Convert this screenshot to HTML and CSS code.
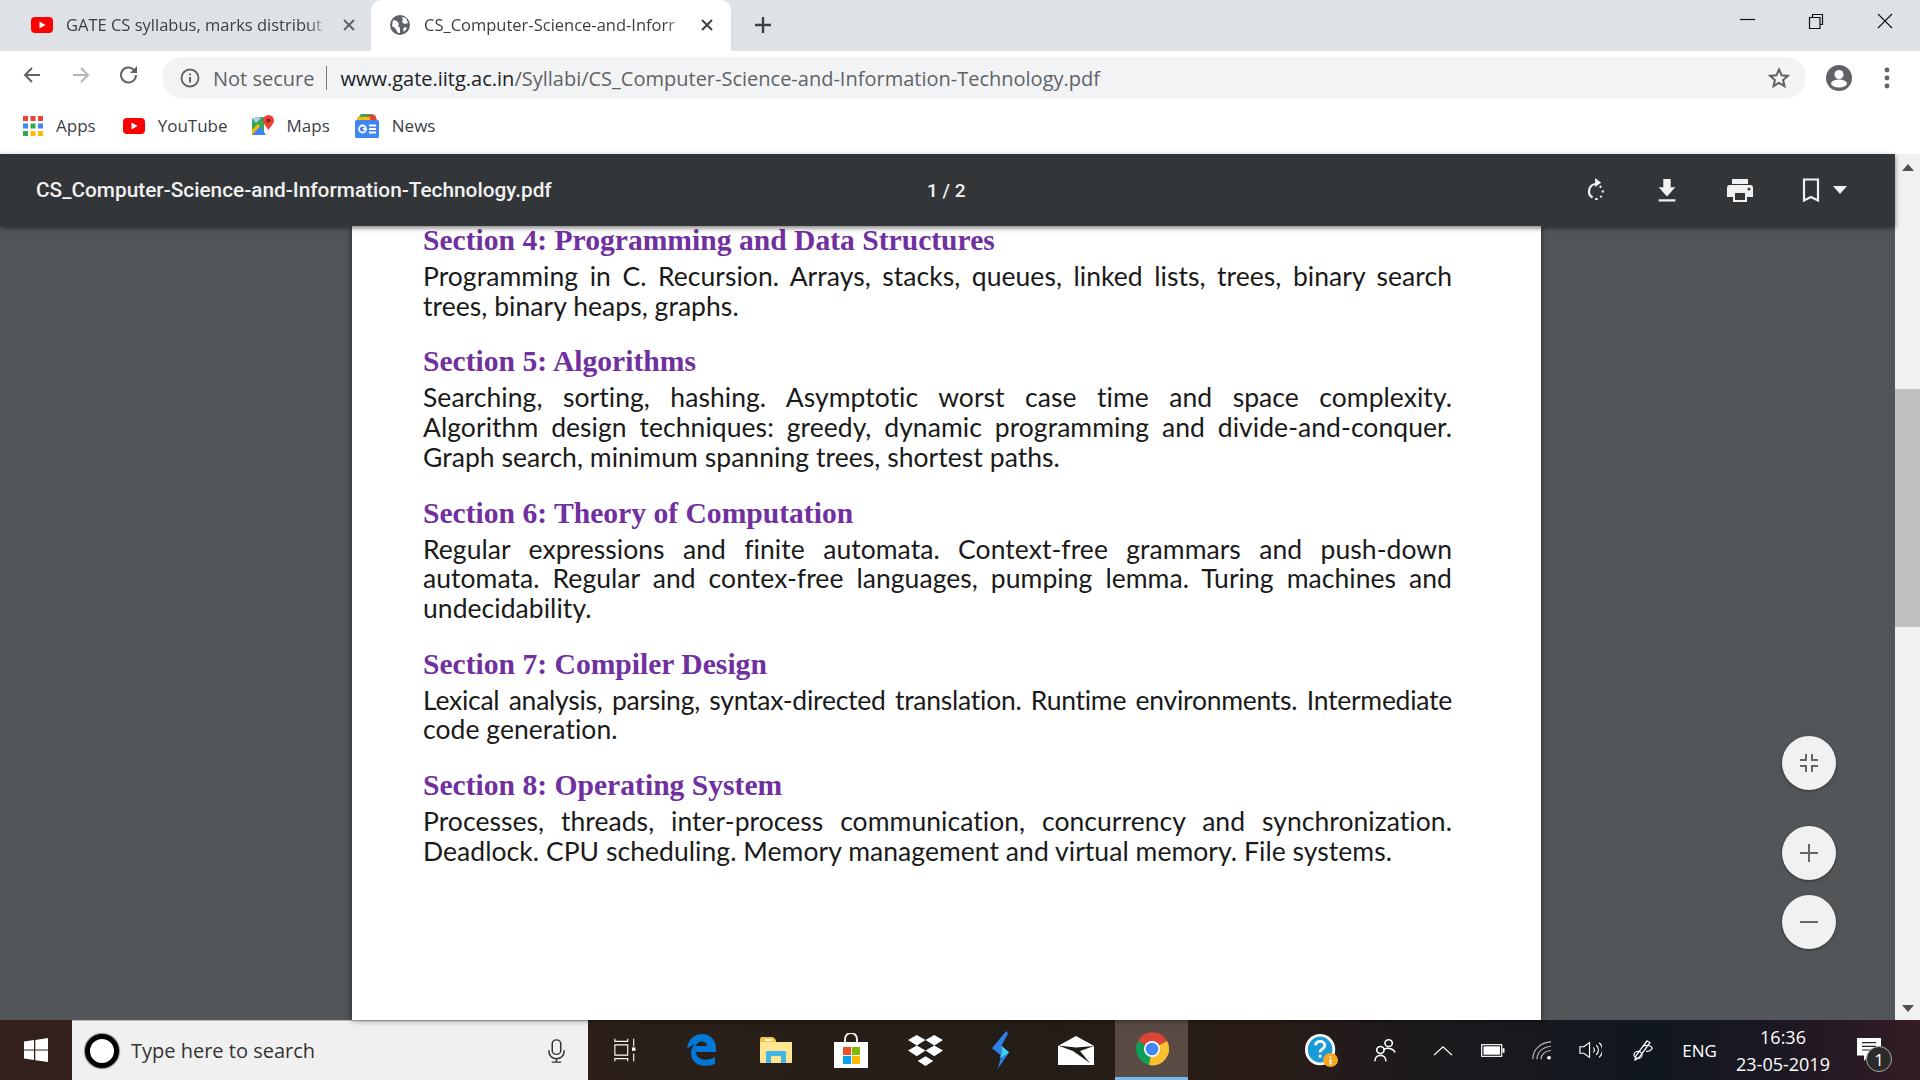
FILE: index.html
```html
<!DOCTYPE html>
<html lang="en">
<head>
    <meta charset="UTF-8">
    <title>CS_Computer-Science-and-Information-Technology.pdf</title>
    <link rel="stylesheet" href="styles.css">
</head>
<body>
    <!-- tab strip -->
    <div class="tabstrip">
        <div class="tab">
            <svg class="favicon" width="22" height="16" viewBox="0 0 22 16"><rect width="22" height="16" rx="4" fill="#f00"/><path d="M8.5 4.5v7l6-3.500z" fill="#fff"/></svg>
            <span class="tab-title">GATE CS syllabus, marks distribut</span>
            <svg class="tab-close" width="12" height="12" viewBox="0 0 12 12"><path d="M1 1l10 10M11 1L1 11" stroke="#5f6368" stroke-width="2"/></svg>
        </div>
        <div class="tab tab-active">
            <svg class="favicon" width="20" height="20" viewBox="0 0 20 20"><circle cx="10" cy="10" r="10" fill="#5f6368"/><path d="M3 5l4 1 2 3-1 2 2 2v5l-2 0-3-5-3-2zM12 2l4 1 2 5-3 1-2-1-1-2 1-1zM15 12l2 1-3 4-1-3z" fill="#fff"/></svg>
            <span class="tab-title">CS_Computer-Science-and-Inforr</span>
            <svg class="tab-close" width="12" height="12" viewBox="0 0 12 12"><path d="M1 1l10 10M11 1L1 11" stroke="#3c4043" stroke-width="2"/></svg>
        </div>
        <svg class="new-tab" width="18" height="18" viewBox="0 0 18 18"><path d="M9 1v16M1 9h16" stroke="#3c4043" stroke-width="2.400"/></svg>
        <div class="window-controls">
            <svg width="16" height="16" viewBox="0 0 16 16"><path d="M1 6.500h15" stroke="#111" stroke-width="1.200"/></svg>
            <svg width="16" height="16" viewBox="0 0 16 16"><path d="M1.500 4.500h10.500v11h-10.500zM4.500 4.500v-3h10v10h-2.500" fill="none" stroke="#111" stroke-width="1.200"/></svg>
            <svg width="16" height="16" viewBox="0 0 16 16"><path d="M1 1l14 14M15 1L1 15" stroke="#111" stroke-width="1.100"/></svg>
        </div>
    </div>

    <!-- address bar -->
    <div class="toolbar">
        <svg class="nav-icon" width="20" height="20" viewBox="0 0 20 20"><path d="M18 10H3M10 3l-7 7 7 7" fill="none" stroke="#5f6368" stroke-width="2"/></svg>
        <svg class="nav-icon" width="20" height="20" viewBox="0 0 20 20"><path d="M2 10h15M10 3l7 7-7 7" fill="none" stroke="#b4b6ba" stroke-width="2"/></svg>
        <svg class="nav-icon nav-reload" width="22" height="22" viewBox="0 0 22 22"><path d="M18 11a7.500 7.500 0 1 1-2.200-5.300L18 8" fill="none" stroke="#5f6368" stroke-width="2"/><path d="M19 2v7h-7z" fill="#5f6368"/></svg>
        <div class="omnibox">
            <svg class="info-icon" width="20" height="20" viewBox="0 0 20 20"><circle cx="10" cy="10" r="8.500" fill="none" stroke="#5f6368" stroke-width="1.800"/><path d="M10 9v5.500M10 5.500v1.800" stroke="#5f6368" stroke-width="2"/></svg>
            <span class="not-secure">Not secure</span>
            <span class="omni-sep"></span>
            <span class="url">www.gate.iitg.ac.in<span class="url-path">/Syllabi/CS_Computer-Science-and-Information-Technology.pdf</span></span>
            <svg class="star" width="22" height="22" viewBox="0 0 22 22"><path d="M11 2.500l2.600 5.800 6.200.6-4.700 4.100 1.400 6.200L11 16l-5.500 3.200 1.400-6.200L2.200 8.900l6.200-.6z" fill="none" stroke="#5f6368" stroke-width="2"/></svg>
        </div>
        <svg class="avatar" width="26" height="26" viewBox="0 0 26 26"><circle cx="13" cy="13" r="13" fill="#5f6368"/><circle cx="13" cy="9.500" r="4.500" fill="#fff"/><ellipse cx="13" cy="18.500" rx="8" ry="4" fill="#fff"/></svg>
        <svg class="kebab" width="6" height="22" viewBox="0 0 6 22"><circle cx="3" cy="3" r="2.400" fill="#5f6368"/><circle cx="3" cy="11" r="2.400" fill="#5f6368"/><circle cx="3" cy="19" r="2.400" fill="#5f6368"/></svg>
    </div>

    <!-- bookmarks -->
    <div class="bookmarks">
        <div class="bookmark bm-apps">
            <svg width="20" height="20" viewBox="0 0 20 20"><rect x="0" y="0" width="5" height="5" fill="#ea4335"/><rect x="7.500" y="0" width="5" height="5" fill="#ea4335"/><rect x="15" y="0" width="5" height="5" fill="#ea4335"/><rect x="0" y="7.500" width="5" height="5" fill="#4285f4"/><rect x="7.500" y="7.500" width="5" height="5" fill="#34a853"/><rect x="15" y="7.500" width="5" height="5" fill="#4285f4"/><rect x="0" y="15" width="5" height="5" fill="#34a853"/><rect x="7.500" y="15" width="5" height="5" fill="#fbbc05"/><rect x="15" y="15" width="5" height="5" fill="#fbbc05"/></svg>
            <span>Apps</span>
        </div>
        <div class="bookmark bm-yt">
            <svg width="22" height="16" viewBox="0 0 22 16"><rect width="22" height="16" rx="4" fill="#f00"/><path d="M8.500 4.500v7l6-3.500z" fill="#fff"/></svg>
            <span>YouTube</span>
        </div>
        <div class="bookmark bm-maps">
            <svg width="22" height="22" viewBox="0 0 22 22"><path d="M0 3l12-1v18L0 20z" fill="#34a853"/><path d="M0 20l8-9 6 9z" fill="#4285f4"/><path d="M8 11L0 20V15l6-6z" fill="#fbbc05"/><path d="M0 3h9L4 8z" fill="#aecbfa"/><path d="M16.500 0a5.500 5.500 0 0 1 5.500 5.500c0 4-4 6-5.500 10-1.500-4-5.500-6-5.500-10A5.500 5.500 0 0 1 16.500 0z" fill="#ea4335"/><circle cx="16.500" cy="5.500" r="2" fill="#8c1d18"/></svg>
            <span>Maps</span>
        </div>
        <div class="bookmark bm-news">
            <svg width="24" height="24" viewBox="0 0 24 24"><path d="M3 4l3-4h12l3 4z" fill="#34a853"/><path d="M12 1h8l2 5H12z" fill="#ea4335"/><path d="M2 3h13v4H2z" fill="#fbbc05"/><rect y="6" width="24" height="18" rx="1.500" fill="#4285f4"/><circle cx="7.500" cy="15" r="3.500" fill="none" stroke="#fff" stroke-width="1.800"/><path d="M8 15h3.500M14 11.500h7M14 15h7M14 18.500h7" stroke="#fff" stroke-width="1.800"/></svg>
            <span>News</span>
        </div>
    </div>

    <!-- pdf viewer -->
    <div class="viewer-row">
        <div class="viewer">
            <div class="pdf-bar">
                <div class="pdf-title">CS_Computer-Science-and-Information-Technology.pdf</div>
                <div class="pdf-pages">1 / 2</div>
                <div class="pdf-actions">
                    <svg width="24" height="28" viewBox="-2 -1 28 30"><path d="M12 7a8.500 8.500 0 0 0-4 15.800" fill="none" stroke="#f1f1f1" stroke-width="2.600"/><path d="M11 0l7 5.500-7 5z" fill="#f1f1f1"/><path d="M16.500 9.500l1.500 1.500M20 14.500v2.500M18.500 21l-1.500 1.500M14 24.500h-3" stroke="#f1f1f1" stroke-width="2.600"/></svg>
                    <svg width="24" height="28" viewBox="-1 -1 26 30"><path d="M8 2h8v9h5l-9 10-9-10h5zM3 24h18v2.500H3z" fill="#f1f1f1"/></svg>
                    <svg width="28" height="28" viewBox="0 0 28 28"><path d="M6 3h16v5H6zM4 9h20a3 3 0 0 1 3 3v9h-6v5H7v-5H1v-9a3 3 0 0 1 3-3z" fill="#f1f1f1"/><rect x="9" y="17" width="10" height="7" fill="#323639"/><circle cx="23" cy="13" r="1.500" fill="#323639"/></svg>
                    <div class="bookmark-action">
                        <svg width="20" height="28" viewBox="0 0 20 28"><path d="M3 3.500h14v21l-7-3.500-7 3.500z" fill="none" stroke="#f1f1f1" stroke-width="2.200"/></svg>
                        <svg width="14" height="8" viewBox="0 0 14 8"><path d="M0 0h14L7 8z" fill="#f1f1f1"/></svg>
                    </div>
                </div>
            </div>
            <div class="pdf-scroll">
                <div class="pdf-page">
                    <section class="syllabus">
                        <h3>Section 4: Programming and Data Structures</h3>
                        <p class="line-full">Programming in C. Recursion. Arrays, stacks, queues, linked lists, trees, binary search</p>
                        <p>trees, binary heaps, graphs.</p>
                    </section>
                    <section class="syllabus">
                        <h3>Section 5: Algorithms</h3>
                        <p class="line-full">Searching, sorting, hashing. Asymptotic worst case time and space complexity.</p>
                        <p class="line-full">Algorithm design techniques: greedy, dynamic programming and divide-and-conquer.</p>
                        <p>Graph search, minimum spanning trees, shortest paths.</p>
                    </section>
                    <section class="syllabus">
                        <h3>Section 6: Theory of Computation</h3>
                        <p class="line-full">Regular expressions and finite automata. Context-free grammars and push-down</p>
                        <p class="line-full">automata. Regular and contex-free languages, pumping lemma. Turing machines and</p>
                        <p>undecidability.</p>
                    </section>
                    <section class="syllabus">
                        <h3>Section 7: Compiler Design</h3>
                        <p class="line-full line-tight">Lexical analysis, parsing, syntax-directed translation. Runtime environments. Intermediate</p>
                        <p>code generation.</p>
                    </section>
                    <section class="syllabus">
                        <h3>Section 8: Operating System</h3>
                        <p class="line-full">Processes, threads, inter-process communication, concurrency and synchronization.</p>
                        <p>Deadlock. CPU scheduling. Memory management and virtual memory. File systems.</p>
                    </section>
                </div>
            </div>
            <button class="fab fab-fit"><svg width="18" height="18" viewBox="0 0 18 18"><path d="M6 0v6H0M12 0v6h6M6 18v-6H0M12 18v-6h6" fill="none" stroke="#666" stroke-width="2"/></svg></button>
            <button class="fab fab-plus"><svg width="18" height="18" viewBox="0 0 18 18"><path d="M9 0v18M0 9h18" stroke="#666" stroke-width="2"/></svg></button>
            <button class="fab fab-minus"><svg width="18" height="18" viewBox="0 0 18 18"><path d="M0 9h18" stroke="#666" stroke-width="2"/></svg></button>
        </div>
        <div class="scrollbar">
            <span class="arrow-up"></span>
            <div class="scroll-track"><div class="scroll-thumb"></div></div>
            <span class="arrow-down"></span>
        </div>
    </div>

    <!-- windows taskbar -->
    <div class="taskbar">
        <div class="start">
            <svg width="24" height="24" viewBox="0 0 24 24"><path d="M0 3.500l10-1.400v9.300H0zM11.300 1.900L24 0v11.400H11.300zM0 12.600h10V22L0 20.500zM11.300 12.600H24V24l-12.700-1.800z" fill="#fff"/></svg>
        </div>
        <div class="search">
            <span class="cortana"></span>
            <span class="search-text">Type here to search</span>
            <svg class="mic" width="17" height="24" viewBox="0 0 18 28" preserveAspectRatio="none"><rect x="4.500" y="1" width="9" height="17" rx="4.500" fill="none" stroke="#333" stroke-width="1.600"/><path d="M1 13v2a8 8 0 0 0 16 0v-2M9 23v4M4 27h10" fill="none" stroke="#333" stroke-width="1.600"/></svg>
        </div>
        <div class="task-slot">
            <svg width="24" height="24" viewBox="0 0 28 28"><path d="M1 1v3h15V1M1 27v-3h15v3M1 8h15v12H1zM23 1v9M23 18v9" fill="none" stroke="#fff" stroke-width="1.300"/><rect x="21" y="11" width="4" height="4" fill="#fff"/></svg>
        </div>
        <div class="task-slot">
            <svg width="30" height="32" viewBox="0 0 30 32"><path d="M1 15C2 5 9 0 16 0c8 0 14 6 14 14v4H10c0 8 11 10 19 5v7c-10 4-24 2-24-11 0-4 2-7 4-9-3 1-6 3-8 5zM10 12h11c0-6-10-6-11 0z" fill="#0078d7"/></svg>
        </div>
        <div class="task-slot">
            <svg width="32" height="26" viewBox="0 0 32 26"><path d="M0 2a2 2 0 0 1 2-2h11l3 3v3H0z" fill="#f5c242"/><path d="M0 5h32v20a1 1 0 0 1-1 1H1a1 1 0 0 1-1-1z" fill="#fde68f"/><path d="M5 2h7v2H5z" fill="#fff"/><path d="M6 26V15a1 1 0 0 1 1-1h18a1 1 0 0 1 1 1v11h-5v-7H11v7z" fill="#42b4e6"/></svg>
        </div>
        <div class="task-slot">
            <svg width="34" height="35" viewBox="0 0 34 35"><path d="M11 9V6a6 6 0 0 1 12 0v3" fill="none" stroke="#e8e8e8" stroke-width="2"/><rect y="9" width="34" height="26" fill="#fff"/><rect x="9" y="14" width="8" height="8" fill="#f25022"/><rect x="18" y="14" width="8" height="8" fill="#7fba00"/><rect x="9" y="23" width="8" height="8" fill="#00a4ef"/><rect x="18" y="23" width="8" height="8" fill="#ffb900"/></svg>
        </div>
        <div class="task-slot">
            <svg width="35" height="31" viewBox="0 0 36 38" preserveAspectRatio="none"><path d="M9 0l9 6-9 7-9-7zM27 0l9 6-9 7-9-7zM9 13l9 6-9 7-9-7zM27 13l9 6-9 7-9-7zM18 26l8 6-8 6-8-6z" fill="#fff"/></svg>
        </div>
        <div class="task-slot">
            <svg width="19" height="38" viewBox="0 0 20 46" preserveAspectRatio="none"><path d="M16 0l2 3-7 15 8 8-12 20 4-16-10-9z" fill="#2f80e8"/><path d="M11 18l8 8-10 7 3-8z" fill="#3fd0ee"/></svg>
        </div>
        <div class="task-slot">
            <svg width="36" height="29" viewBox="0 0 36 29"><path d="M0 10L18 0l18 10v19H0z" fill="#fff"/><path d="M0 9.500l18 2 18-1.500-14 5 10 12-17-12z" fill="#221a14"/><path d="M2 9L18 1l16 8z" fill="#fff"/></svg>
        </div>
        <div class="task-slot task-active">
            <svg width="34" height="34" viewBox="0 0 34 34">
                <path d="M17 17L3 9a16.500 16.500 0 0 1 29 0z" fill="#db4437"/>
                <path d="M17 17L3 9a16.500 16.500 0 0 0 11 24z" fill="#0f9d58"/>
                <path d="M17 17l15-8a16.500 16.500 0 0 1-18 24z" fill="#fbc02d"/>
                <circle cx="17" cy="17" r="8" fill="#fff"/><circle cx="17" cy="17" r="6.300" fill="#4285f4"/>
            </svg>
        </div>
        <div class="tray">
            <div class="tray-slot ts-help">
                <svg width="34" height="33" viewBox="0 0 36 38" preserveAspectRatio="none"><ellipse cx="16" cy="18" rx="16" ry="18" fill="#fff"/><ellipse cx="16" cy="18" rx="13" ry="15" fill="#1a9ad6"/><path d="M11 13c1-6 10-6 10 0 0 4-5 4-5 8M16 24v3" fill="none" stroke="#fff" stroke-width="3"/><circle cx="27" cy="30" r="8" fill="#f5a623"/><path d="M27 26v1.500M27 29v6" stroke="#fff" stroke-width="2"/></svg>
            </div>
            <div class="tray-slot ts-people">
                <svg width="22" height="24" viewBox="0 0 24 28" preserveAspectRatio="none"><circle cx="16" cy="6" r="4" fill="none" stroke="#fff" stroke-width="1.800"/><path d="M11 14c1-3 10-3 12 3" fill="none" stroke="#fff" stroke-width="1.800"/><circle cx="7" cy="14" r="4" fill="none" stroke="#fff" stroke-width="1.800"/><path d="M1 27c0-9 12-9 12 0" fill="none" stroke="#fff" stroke-width="1.800"/></svg>
            </div>
            <div class="tray-slot ts-chevron">
                <svg width="20" height="11" viewBox="0 0 20 12" preserveAspectRatio="none"><path d="M1 11l9-9 9 9" fill="none" stroke="#fff" stroke-width="1.300"/></svg>
            </div>
            <div class="tray-slot ts-battery">
                <svg width="24" height="13" viewBox="0 0 24 14" preserveAspectRatio="none"><rect x=".7" y=".7" width="20" height="12.600" fill="none" stroke="#fff" stroke-width="1.200"/><rect x="2.500" y="2.500" width="16.500" height="9" fill="#fff"/><rect x="21.500" y="4.500" width="2" height="5" fill="#fff"/></svg>
            </div>
            <div class="tray-slot ts-wifi">
                <svg width="20" height="19" viewBox="0 0 20 22" preserveAspectRatio="none"><path d="M1 21A19 19 0 0 1 19 1M5 21A15 15 0 0 1 19 6M9 21A10 10 0 0 1 19 11" fill="none" stroke="#bbb" stroke-width="1.200"/><circle cx="17" cy="19.500" r="2" fill="#fff"/></svg>
            </div>
            <div class="tray-slot ts-volume">
                <svg width="23" height="18" viewBox="0 0 24 22" preserveAspectRatio="none"><path d="M1 7h4l6-5v18l-6-5H1z" fill="none" stroke="#fff" stroke-width="1.200"/><path d="M15 8a5 5 0 0 1 0 6M18 5a9 9 0 0 1 0 12M21 2a13 13 0 0 1 0 18" fill="none" stroke="#fff" stroke-width="1.200"/></svg>
            </div>
            <div class="tray-slot ts-pen">
                <svg width="22" height="21" viewBox="0 0 22 24" preserveAspectRatio="none"><path d="M15 1l3 2-11 17-4 3 1-5zM11 7c4-2 10 0 9 3-1 2-4 3-6 3" fill="none" stroke="#fff" stroke-width="1.300"/><circle cx="6" cy="17" r="4" fill="none" stroke="#fff" stroke-width="1.200"/></svg>
            </div>
            <div class="tray-slot ts-lang">ENG</div>
            <div class="tray-slot ts-clock"><span>16:36</span><span>23-05-2019</span></div>
            <div class="tray-slot ts-notify">
                <svg width="24" height="24" viewBox="0 0 24 26" preserveAspectRatio="none"><path d="M0 0h24v19H12l-5 6v-6H0z" fill="#fff"/><path d="M5 5h14M5 9h14M5 13h14" stroke="#222" stroke-width="1.300"/></svg>
                <span class="notify-badge">1</span>
            </div>
        </div>
    </div>
</body>
</html>
```

FILE: styles.css
```css
* {
    box-sizing: border-box;
}
html, body {
    height: 100%;
}
body {
    margin: 0;
    height: 1080px;
    overflow: hidden;
    display: flex;
    flex-direction: column;
    font-family: "Open Sans", "Noto Sans", sans-serif;
    background: #fff;
}
svg {
    display: block;
    flex: none;
}

/* tab strip */
.tabstrip {
    height: 51px;
    flex: none;
    display: flex;
    background: #dee1e6;
}
.tab {
    width: 371px;
    height: 51px;
    padding: 0 16px 2px 31px;
    display: flex;
    align-items: center;
    color: #3c4043;
    font-size: 16.5px;
}
.tab-active {
    width: 360px;
    padding-left: 19px;
    padding-right: 18px;
    background: #fff;
    border-radius: 10px 10px 0 0;
    color: #3c4043;
}
.tab-title {
    flex: 1;
    min-width: 0;
    margin-left: 13px;
    margin-right: 12px;
    white-space: nowrap;
    -webkit-mask-image: linear-gradient(to left, transparent, #000 24px);
    mask-image: linear-gradient(to left, transparent, #000 24px);
}
.tab-active .tab-title {
    margin-left: 14px;
}
.new-tab {
    margin: 16px 0 0 23px;
}
.window-controls {
    margin-left: auto;
    margin-right: 27px;
    padding-top: 13px;
    display: flex;
    gap: 53px;
}

/* address bar */
.toolbar {
    height: 48px;
    flex: none;
    display: flex;
    align-items: center;
    background: #fff;
}
.nav-icon {
    margin-left: 22px;
    margin-right: 7px;
}
.nav-reload {
    margin-left: 20px;
    margin-right: 10px;
}
.omnibox {
    width: 1644px;
    height: 42px;
    margin-left: 12px;
    margin-top: 6px;
    padding: 0 16px 0 18px;
    border-radius: 21px;
    display: flex;
    align-items: center;
    background: #f1f3f4;
    font-size: 20px;
}
.not-secure {
    margin-left: 13px;
    color: #5f6368;
}
.omni-sep {
    width: 1px;
    height: 24px;
    margin: 0 13px 0 12px;
    background: #777;
}
.url {
    color: #202124;
    white-space: nowrap;
}
.url-path {
    color: #5f6368;
}
.star {
    margin-left: auto;
}
.avatar {
    margin-left: 20px;
    margin-top: 6px;
}
.kebab {
    margin-left: 32px;
    margin-top: 6px;
}

/* bookmarks */
.bookmarks {
    height: 55px;
    flex: none;
    display: flex;
    align-items: center;
    padding-left: 23px;
    padding-bottom: 2px;
    background: #fff;
    color: #3c4043;
    font-size: 17px;
}
.bookmark {
    display: flex;
    align-items: center;
    gap: 13px;
}
.bm-yt {
    margin-left: 27px;
}
.bm-maps {
    margin-left: 24px;
}
.bm-news {
    margin-left: 25px;
}

/* pdf viewer */
.viewer-row {
    flex: 1;
    min-height: 0;
    display: flex;
}
.viewer {
    flex: 1;
    min-width: 0;
    position: relative;
    display: flex;
    flex-direction: column;
    background: #525659;
}
.pdf-bar {
    height: 72px;
    flex: none;
    position: relative;
    z-index: 2;
    display: flex;
    align-items: center;
    padding-left: 36px;
    background: #323639;
    box-shadow: 0 2px 5px rgba(0,0,0,0.5);
    color: #f1f1f1;
    font-family: Roboto, sans-serif;
    font-size: 20.8px;
}
.pdf-title {
    width: 891px;
    font-weight: 500;
    white-space: nowrap;
}
.pdf-pages {
    width: 200px;
    font-size: 19px;
    font-weight: 500;
}
.pdf-actions {
    margin-left: auto;
    margin-right: 48px;
    display: flex;
    align-items: center;
    gap: 47px;
}
.bookmark-action {
    display: flex;
    align-items: center;
    gap: 12px;
}
.pdf-scroll {
    flex: 1;
    min-height: 0;
    padding-left: 352px;
}
.pdf-page {
    width: 1189px;
    height: 100%;
    padding: 0 89px 0 71px;
    background: #fff;
    box-shadow: 0 0 6px rgba(0,0,0,0.55);
}
.syllabus {
    margin-bottom: 26.3px;
}
.syllabus h3 {
    margin: 0 0 8px;
    height: 28px;
    line-height: 28px;
    color: #7030a0;
    font-family: "Liberation Serif", serif;
    font-size: 29.6px;
    font-weight: bold;
    white-space: nowrap;
}
.syllabus p {
    margin: 0;
    height: 29.6px;
    line-height: 29.6px;
    color: #1a1a1a;
    font-family: Lato, sans-serif;
    font-size: 26.5px;
    letter-spacing: 0.05px;
    white-space: nowrap;
}
.syllabus .line-full {
    white-space: normal;
    text-align: justify;
    text-align-last: justify;
}
.syllabus .line-tight {
    letter-spacing: -0.25px;
}
.fab {
    position: absolute;
    left: 1782px;
    width: 54px;
    height: 54px;
    padding: 0;
    border: none;
    border-radius: 50%;
    display: flex;
    align-items: center;
    justify-content: center;
    background: #f1f1f1;
    box-shadow: 0 1px 3px rgba(0,0,0,0.4);
}
.fab-fit {
    top: 582px;
}
.fab-plus {
    top: 672px;
}
.fab-minus {
    top: 741px;
}

/* scrollbar */
.scrollbar {
    width: 25px;
    flex: none;
    display: flex;
    flex-direction: column;
    align-items: center;
    background: #f1f1f1;
}
.arrow-up, .arrow-down {
    width: 0;
    height: 0;
    border-left: 6px solid transparent;
    border-right: 6px solid transparent;
}
.arrow-up {
    margin-top: 10px;
    border-bottom: 7px solid #505050;
}
.arrow-down {
    margin-bottom: 8px;
    border-top: 7px solid #505050;
}
.scroll-track {
    flex: 1;
    width: 100%;
    padding-top: 218px;
}
.scroll-thumb {
    height: 238px;
    background: #c1c1c1;
}

/* taskbar */
.taskbar {
    height: 60px;
    flex: none;
    display: flex;
    align-items: center;
    color: #fff;
    background: linear-gradient(to right, #33201b 0, #2c1f19 30%, #241d17 55%, #2a1c18 66%, #1c1a1d 74%, #11171f 86%, #1a1822 92%, #351c26 100%);
}
.start {
    width: 72px;
    height: 100%;
    display: flex;
    align-items: center;
    justify-content: center;
}
.search {
    width: 516px;
    height: 100%;
    display: flex;
    align-items: center;
    padding-left: 13px;
    background: #f0f0f0;
    border-top: 1px solid #bbb;
    color: #333;
    font-size: 20px;
}
.cortana {
    width: 34px;
    height: 34px;
    border-radius: 50%;
    border: 5px solid #000;
    box-shadow: 0 0 1px 1px #888;
    background: #fff;
    flex: none;
}
.search-text {
    margin-left: 12px;
}
.mic {
    margin-left: auto;
    margin-right: 23px;
}
.task-slot {
    width: 75px;
    height: 100%;
    display: flex;
    align-items: center;
    justify-content: center;
}
.task-active {
    width: 73px;
    margin-left: 2px;
    background: #594a44;
    border-bottom: 3px solid #76b9ed;
}
.tray {
    margin-left: auto;
    height: 100%;
    display: flex;
    align-items: center;
}
.tray-slot {
    height: 100%;
    display: flex;
    align-items: center;
    justify-content: center;
}
.ts-help { width: 62px; }
.ts-people { width: 64px; }
.ts-chevron { width: 52px; }
.ts-battery { width: 48px; }
.ts-wifi { width: 50px; }
.ts-volume { width: 46px; }
.ts-pen { width: 60px; }
.ts-lang {
    width: 53px;
    font-size: 17px;
}
.ts-clock {
    width: 114px;
    flex-direction: column;
    gap: 3px;
    font-size: 18px;
    line-height: 24px;
}
.ts-notify {
    width: 58px;
    margin-right: 22px;
    position: relative;
}
.notify-badge {
    position: absolute;
    left: 26px;
    top: 26px;
    width: 26px;
    height: 26px;
    border-radius: 50%;
    border: 1px solid #aaa;
    background: #2b2b2b;
    display: flex;
    align-items: center;
    justify-content: center;
    font-size: 17px;
}
```
